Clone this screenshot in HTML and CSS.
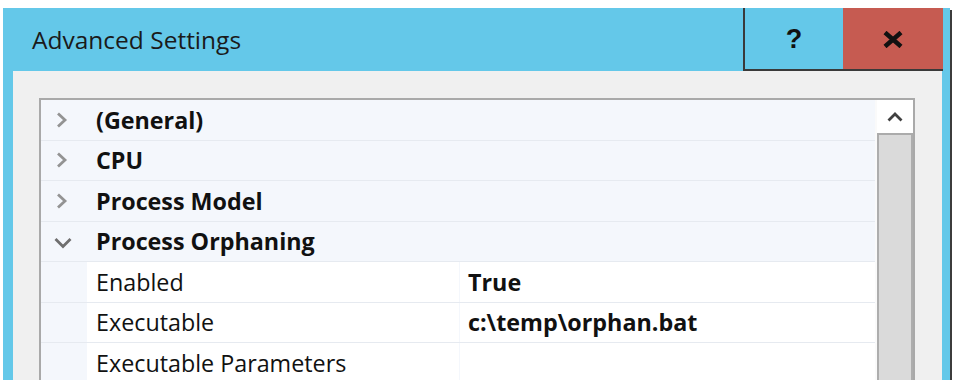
FILE: index.html
```html
<!DOCTYPE html>
<html>
<head>
    <title>Advanced Settings</title>
    <link rel="stylesheet" href="styles.css">
</head>
<body>
    <div class="window">
        <div class="titlebar">
            <div class="title">Advanced Settings</div>
            <div class="btn help">?</div>
            <div class="btn close">
                <svg width="22" height="17" viewBox="0 0 22 17">
                    <path d="M3 1.5 L19 15.5 M19 1.5 L3 15.5" stroke="#111" stroke-width="4.5" fill="none"/>
                </svg>
            </div>
        </div>

        <div class="client">
            <div class="grid">
                <div class="rows">
                    <div class="row cat">
                        <span class="toggle"><svg width="12" height="16" viewBox="0 0 12 16"><path d="M2 1.5 L9 8 L2 14.5" stroke="#939393" stroke-width="2.8" fill="none"/></svg></span>
                        <span class="name">(General)</span>
                    </div>
                    <div class="row cat">
                        <span class="toggle"><svg width="12" height="16" viewBox="0 0 12 16"><path d="M2 1.5 L9 8 L2 14.5" stroke="#939393" stroke-width="2.8" fill="none"/></svg></span>
                        <span class="name">CPU</span>
                    </div>
                    <div class="row cat">
                        <span class="toggle"><svg width="12" height="16" viewBox="0 0 12 16"><path d="M2 1.5 L9 8 L2 14.5" stroke="#939393" stroke-width="2.8" fill="none"/></svg></span>
                        <span class="name">Process Model</span>
                    </div>
                    <div class="row cat">
                        <span class="toggle open"><svg width="18" height="12" viewBox="0 0 18 12"><path d="M1.5 2 L9 9.5 L16.5 2" stroke="#6f6f6f" stroke-width="2.8" fill="none"/></svg></span>
                        <span class="name">Process Orphaning</span>
                    </div>
                    <div class="row prop">
                        <span class="toggle"></span>
                        <span class="name">Enabled</span>
                        <span class="value">True</span>
                    </div>
                    <div class="row prop">
                        <span class="toggle"></span>
                        <span class="name">Executable</span>
                        <span class="value">c:\temp\orphan.bat</span>
                    </div>
                    <div class="row prop">
                        <span class="toggle"></span>
                        <span class="name">Executable Parameters</span>
                        <span class="value"></span>
                    </div>
                </div>

                <div class="scrollbar">
                    <div class="up">
                        <svg width="16" height="10" viewBox="0 0 16 10"><path d="M1.5 8.5 L8 2 L14.5 8.5" stroke="#404040" stroke-width="2.8" fill="none"/></svg>
                    </div>
                    <div class="track"></div>
                </div>
            </div>
        </div>
    </div>
</body>
</html>
```

FILE: styles.css
```css
body {
    margin: 0;
    background-color: #fff;
    font-family: 'Open Sans', sans-serif;
    color: #111;
}

.window {
    margin: 8px 0 0 3px;
    width: 947px;
    height: 372px;
    background-color: #64c8e9;
    box-shadow: 2px 2px 0 #3c3c3c;
    display: flex;
    flex-direction: column;
}

/* title bar */
.titlebar {
    height: 63px;
    display: flex;
    padding-right: 7px;
    flex: none;
}

.title {
    flex: 1;
    padding-left: 29px;
    font-size: 24.5px;
    display: flex;
    align-items: center;
    color: #1a1a1a;
}

.btn {
    width: 100px;
    box-sizing: border-box;
    display: flex;
    align-items: center;
    justify-content: center;
    border-bottom: 2px solid #3a3a3a;
}

.help {
    border-left: 2px solid #3a3a3a;
    font-family: 'Liberation Sans', Arial, sans-serif;
    font-weight: bold;
    font-size: 27px;
    padding-top: 2px;
}

.close {
    background-color: #c65b51;
    padding-top: 2px;
}

/* window content */
.client {
    flex: 1;
    margin: 0 8px 0 10px;
    background-color: #f0f0f0;
    padding: 27px 27px 0 26px;
    overflow: hidden;
    display: flex;
}

.grid {
    flex: 1;
    display: flex;
    border: 2px solid #a9a9a9;
    border-bottom: none;
    background-color: #f4f7fc;
}

.rows {
    flex: 1;
}

.row {
    display: flex;
    height: 40.5px;
    box-sizing: border-box;
    border-bottom: 1px solid #e6eaf0;
    font-size: 23.3px;
}

.toggle {
    width: 46px;
    flex: none;
    display: flex;
    align-items: center;
    padding-left: 15px;
    box-sizing: border-box;
}

.toggle.open {
    padding-left: 13px;
    padding-top: 3px;
}

.cat .name {
    font-weight: bold;
    padding-left: 9px;
    display: flex;
    align-items: center;
}

.prop .name,
.prop .value {
    background-color: #fff;
    display: flex;
    align-items: center;
}

.prop .name {
    width: 372px;
    padding-left: 9px;
    box-sizing: border-box;
}

.prop .value {
    flex: 1;
    margin-left: 1px;
    padding-left: 8px;
    font-weight: bold;
}

/* scrollbar */
.scrollbar {
    width: 36px;
    display: flex;
    flex-direction: column;
    border-left: 2px solid #fafafa;
}

.up {
    height: 33px;
    background-color: #fff;
    border-bottom: 2px solid #ababab;
    display: flex;
    align-items: center;
    justify-content: center;
}

.track {
    flex: 1;
    background-color: #dadada;
    border-left: 2px solid #adadad;
    border-right: 2px solid #adadad;
}
```
